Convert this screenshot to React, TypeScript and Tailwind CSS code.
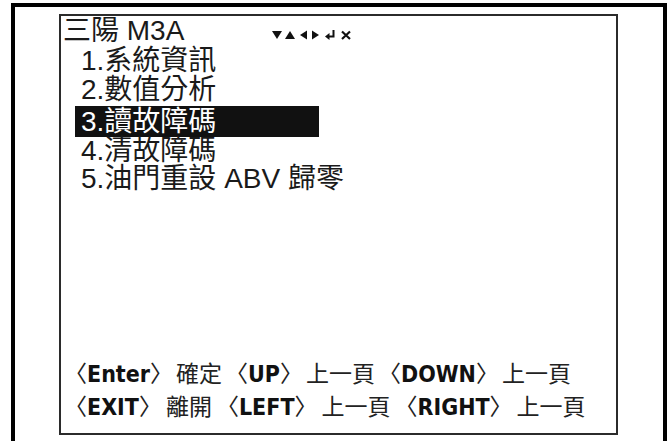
import React from 'react';

const cjk = '"Liberation Sans", "Noto Sans CJK TC", sans-serif';
const narrow = '"Liberation Sans Narrow", "DejaVu Sans Condensed", "Noto Sans CJK TC", sans-serif';

const menu = [
  { id: 1, label: '1.系統資訊' },
  { id: 2, label: '2.數值分析' },
  { id: 3, label: '3.讀故障碼' },
  { id: 4, label: '4.清故障碼' },
  { id: 5, label: '5.油門重設 ABV 歸零' },
];

const rowHeights: Record<number, string> = {
  1: 'h-[29px]',
  2: 'h-[29px]',
  3: 'h-[31px] mt-[2px]',
  4: 'h-[28px]',
  5: 'h-[28px]',
};

const StatusIcons: React.FC = () => (
  <svg width="82" height="12" viewBox="0 0 82 12" className="ml-[88px] mt-[7px]">
    <polygon points="0,2 10,2 5,10" fill="#111" />
    <polygon points="13,10 23,10 18,2" fill="#111" />
    <polygon points="28,6 35,1.5 35,10.5" fill="#111" />
    <polygon points="40,1.5 40,10.5 47,6" fill="#111" />
    <path d="M61.5 1 V7.5 H57" stroke="#111" strokeWidth="2" fill="none" />
    <polygon points="53,7.5 57.5,4 57.5,11" fill="#111" />
    <path d="M70 2.5 L78 10 M78 2.5 L70 10" stroke="#111" strokeWidth="2.2" />
  </svg>
);

const Key: React.FC<{ name: string }> = ({ name }) => (
  <span className="inline-flex items-center">
    <span style={{ fontFamily: cjk }} className="font-normal">〈</span>
    <span style={{ fontFamily: narrow }} className="font-bold text-[#111]">{name}</span>
    <span style={{ fontFamily: cjk }} className="font-normal">〉</span>
  </span>
);

export default function App() {
  return (
    <div className="w-[669px] h-[441px] bg-white overflow-hidden pt-[3px] pl-[11px]">
      <div className="w-[656px] h-[438px] border-x-4 border-t-4 border-black pl-[44px] pt-[7px]">
        <div className="w-[559px] h-[421px] border-2 border-[#2b2b2b] flex flex-col text-[#1a1a1a]" style={{ fontFamily: cjk }}>
          <div className="h-[30px] flex items-center pl-[2px] text-[28px] leading-none">
            <span>三陽 M3A</span>
            <StatusIcons />
          </div>
          <div className="ml-[14px] flex flex-col">
            {menu.map((m) => (
              <div
                key={m.id}
                className={`${rowHeights[m.id]} flex items-center pl-[6px] text-[28px] leading-none ${
                  m.id === 3 ? 'w-[244px] bg-[#111] text-white' : ''
                }`}
              >
                {m.label}
              </div>
            ))}
          </div>
          <div className="mt-auto pb-[9px] pl-[3px] text-[23px] leading-none text-[#222]">
            <div className="h-[33px] flex items-center gap-[3px]">
              <Key name="Enter" />
              <span>確定</span>
              <Key name="UP" />
              <span>上一頁</span>
              <Key name="DOWN" />
              <span>上一頁</span>
            </div>
            <div className="h-[33px] flex items-center gap-[4px]">
              <Key name="EXIT" />
              <span>離開</span>
              <Key name="LEFT" />
              <span>上一頁</span>
              <Key name="RIGHT" />
              <span>上一頁</span>
            </div>
          </div>
        </div>
      </div>
    </div>
  );
}
